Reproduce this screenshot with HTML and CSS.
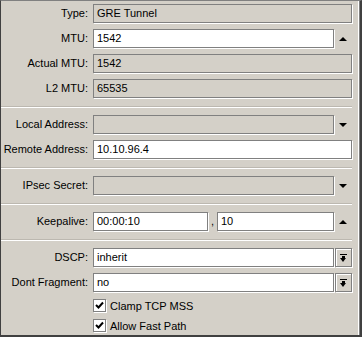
FILE: index.html
```html
<!DOCTYPE html>
<html lang="en">
<head>
    <meta charset="UTF-8">
    <title>Interface &lt;gre-tunnel&gt;</title>
    <link rel="stylesheet" href="styles.css">
</head>
<body>
    <div class="window">
        <!-- General -->
        <div class="section first">
            <div class="row">
                <label class="label">Type:</label>
                <div class="field disabled">GRE Tunnel</div>
            </div>
            <div class="row">
                <label class="label">MTU:</label>
                <div class="field">1542</div>
                <span class="side"><span class="arrow-up"></span></span>
            </div>
            <div class="row">
                <label class="label">Actual MTU:</label>
                <div class="field disabled">1542</div>
            </div>
            <div class="row">
                <label class="label">L2 MTU:</label>
                <div class="field disabled">65535</div>
            </div>
        </div>

        <div class="sep"></div>

        <!-- Addresses -->
        <div class="section">
            <div class="row">
                <label class="label">Local Address:</label>
                <div class="field disabled"></div>
                <span class="side"><span class="arrow-down"></span></span>
            </div>
            <div class="row">
                <label class="label">Remote Address:</label>
                <div class="field">10.10.96.4</div>
            </div>
        </div>

        <div class="sep"></div>

        <div class="section">
            <div class="row">
                <label class="label">IPsec Secret:</label>
                <div class="field disabled"></div>
                <span class="side"><span class="arrow-down"></span></span>
            </div>
        </div>

        <div class="sep"></div>

        <div class="section">
            <div class="row">
                <label class="label">Keepalive:</label>
                <div class="field short">00:00:10</div>
                <span class="comma">,</span>
                <div class="field">10</div>
                <span class="side"><span class="arrow-up"></span></span>
            </div>
        </div>

        <div class="sep"></div>

        <div class="section last">
            <div class="row">
                <label class="label">DSCP:</label>
                <div class="field">inherit</div>
                <span class="btn"><span class="drop-icon"></span></span>
            </div>
            <div class="row">
                <label class="label">Dont Fragment:</label>
                <div class="field">no</div>
                <span class="btn"><span class="drop-icon"></span></span>
            </div>

            <div class="check-row">
                <span class="checkbox">
                    <svg width="9" height="9" viewBox="0 0 9 9"><polyline points="1,4 3.5,6.5 8,1.5" fill="none" stroke="#000" stroke-width="2"/></svg>
                </span>
                <span>Clamp TCP MSS</span>
            </div>
            <div class="check-row">
                <span class="checkbox">
                    <svg width="9" height="9" viewBox="0 0 9 9"><polyline points="1,4 3.5,6.5 8,1.5" fill="none" stroke="#000" stroke-width="2"/></svg>
                </span>
                <span>Allow Fast Path</span>
            </div>
        </div>
    </div>
</body>
</html>
```

FILE: styles.css
```css
html, body {
    margin: 0;
    padding: 0;
}

body {
    font-family: "Liberation Sans", Arial, sans-serif;
    font-size: 11px;
    color: #000;
    background: #d4d0c8;
}

.window {
    box-sizing: border-box;
    width: 362px;
    height: 337px;
    background: #d4d0c8;
    border-top: 1px solid #808080;
    border-left: 1px solid #404040;
    border-right: 2px solid #404040;
    border-bottom: 2px solid #404040;
    box-shadow: inset -1px 0 0 #808080, inset -2px 0 0 #fff;
    padding: 3px 8px 0 0;
}

.section {
    display: flex;
    flex-direction: column;
    gap: 6px;
    padding: 7px 0 8px;
}

.section.first {
    padding-top: 0;
}

.row {
    display: flex;
    align-items: center;
    height: 19px;
}

.label {
    width: 87px;
    margin-right: 5px;
    text-align: right;
    line-height: 19px;
    white-space: nowrap;
}

.field {
    flex: 1;
    box-sizing: border-box;
    height: 19px;
    line-height: 17px;
    padding-left: 3px;
    border: 1px solid #808080;
    box-shadow: 1px 1px 0 #fff;
    background: #fff;
    white-space: nowrap;
    overflow: hidden;
}

.field.disabled {
    background: #d4d0c8;
}

.field.short {
    flex: none;
    width: 115px;
}

.comma {
    width: 9px;
    text-align: center;
    line-height: 19px;
}

.side {
    width: 18px;
    height: 19px;
    display: flex;
    align-items: center;
    justify-content: center;
}

.arrow-up {
    width: 0;
    height: 0;
    border-left: 4px solid transparent;
    border-right: 4px solid transparent;
    border-bottom: 4px solid #000;
}

.arrow-down {
    width: 0;
    height: 0;
    border-left: 4px solid transparent;
    border-right: 4px solid transparent;
    border-top: 4px solid #000;
}

.btn {
    box-sizing: border-box;
    width: 17px;
    height: 19px;
    margin-left: 1px;
    border: 1px solid #808080;
    box-shadow: inset 1px 1px 0 #fff, 1px 1px 0 #fff;
    background: #d4d0c8;
    display: flex;
    align-items: center;
    justify-content: center;
}

/* bar + down arrow */
.drop-icon {
    position: relative;
    width: 7px;
    height: 8px;
    border-top: 1px solid #000;
    box-sizing: border-box;
}

.drop-icon::before {
    content: "";
    position: absolute;
    left: 2px;
    top: 1px;
    width: 3px;
    height: 2px;
    background: #000;
}

.drop-icon::after {
    content: "";
    position: absolute;
    left: 0;
    top: 3px;
    border-left: 3.5px solid transparent;
    border-right: 3.5px solid transparent;
    border-top: 4px solid #000;
}

.sep {
    height: 0;
    border-top: 1px solid #bcb8b0;
    border-bottom: 1px solid #fff;
}

.section.last {
    padding-bottom: 0;
}

.check-row {
    display: flex;
    align-items: center;
    height: 13px;
    padding-left: 92px;
    margin-top: 1px;
}

.check-row + .check-row {
    margin-top: 1px;
}

.checkbox {
    box-sizing: border-box;
    width: 13px;
    height: 13px;
    margin-right: 4px;
    border: 1px solid #808080;
    box-shadow: 1px 1px 0 #fff;
    background: #fff;
    display: flex;
    align-items: center;
    justify-content: center;
}
```
